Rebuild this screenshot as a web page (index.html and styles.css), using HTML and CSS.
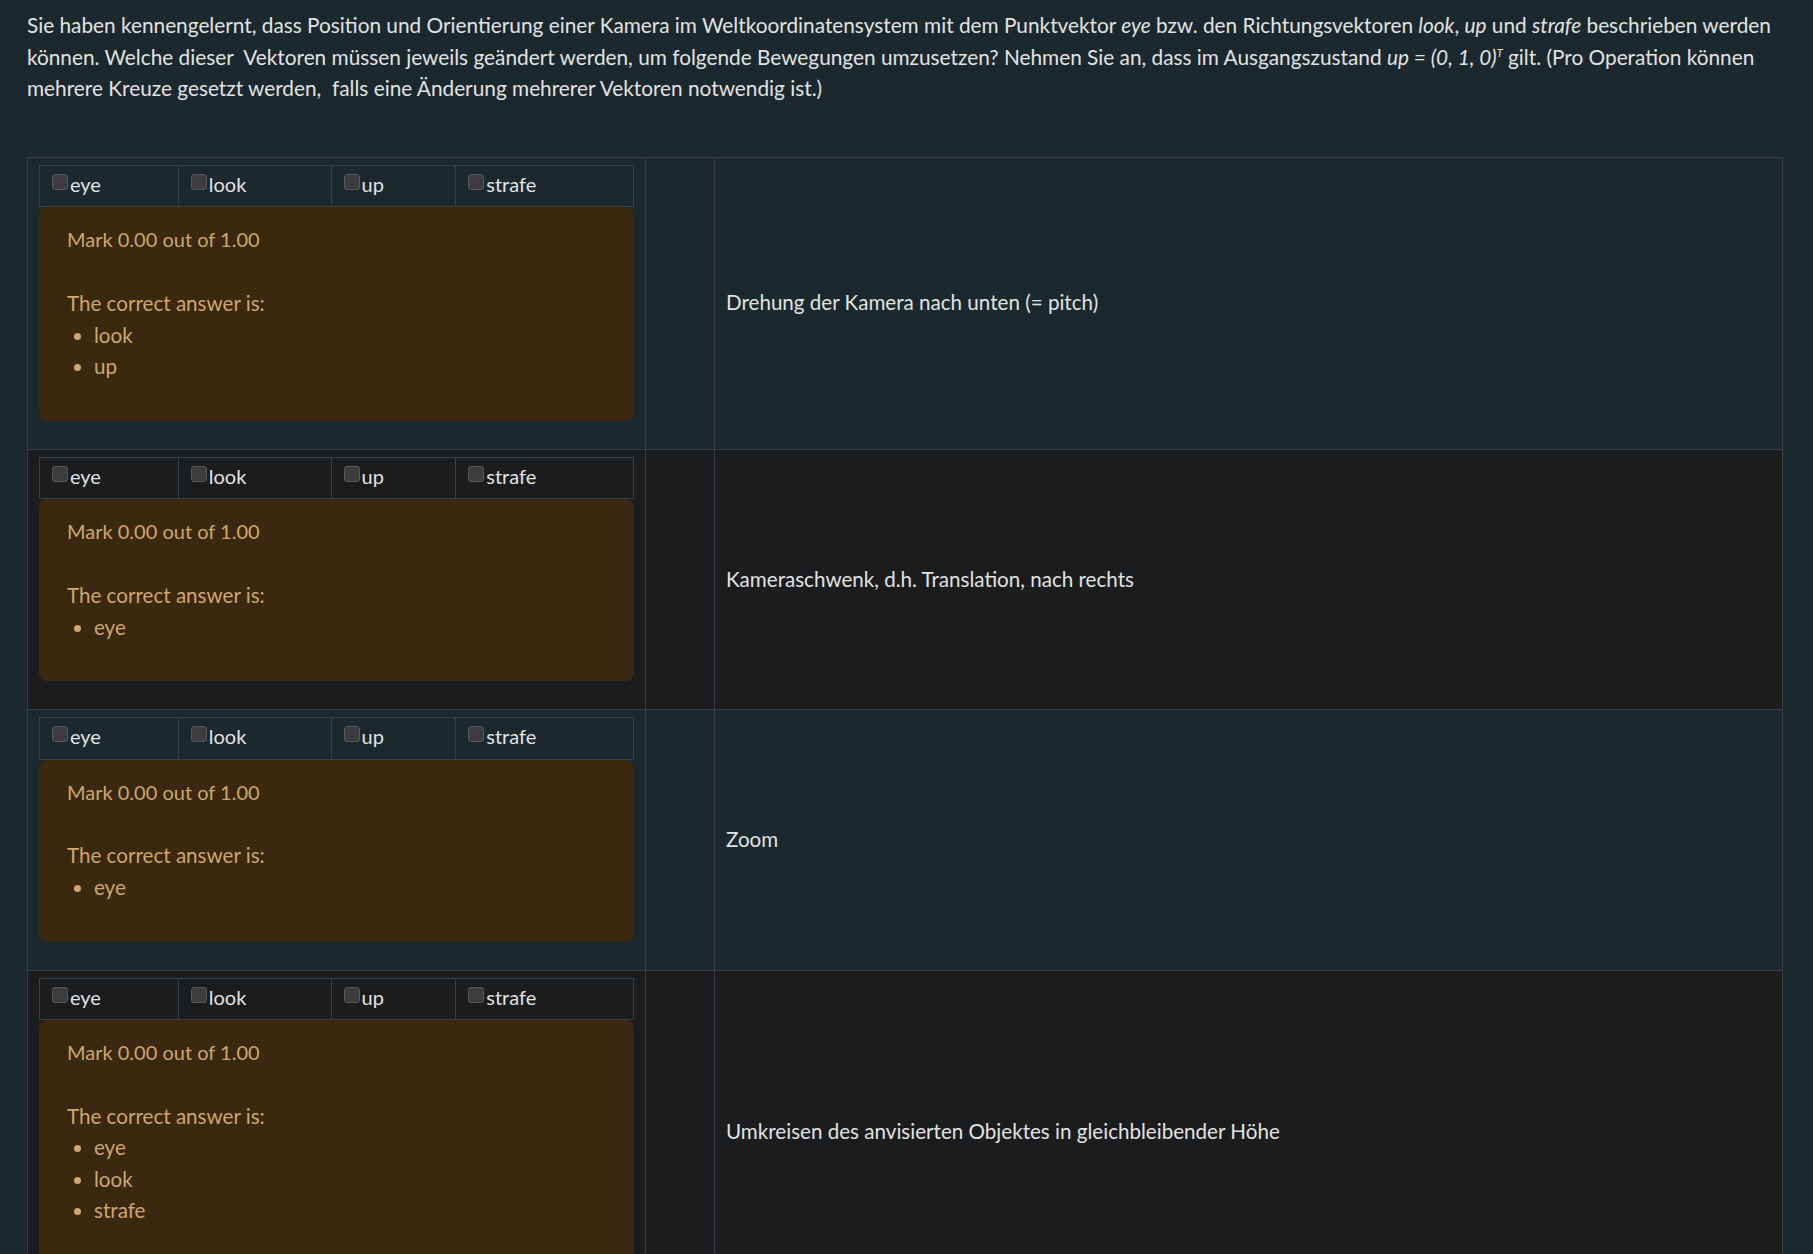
FILE: index.html
```html
<!DOCTYPE html>
<html lang="de">
<head>
<meta charset="utf-8">
<title>Frage</title>
<link rel="stylesheet" href="styles.css">
</head>
<body>
<div class="page">
  <p class="question">Sie haben kennengelernt, dass Position und Orientierung einer Kamera im Weltkoordinatensystem mit dem Punktvektor <em>eye</em> bzw. den Richtungsvektoren <em>look</em>, <em>up</em> und <em>strafe</em> beschrieben werden können. Welche dieser&nbsp; Vektoren müssen jeweils geändert werden, um folgende Bewegungen umzusetzen? Nehmen Sie an, dass im Ausgangszustand <em>up = (0, 1, 0)<sup>T</sup></em> gilt. (Pro Operation können mehrere Kreuze gesetzt werden,&nbsp; falls eine Änderung mehrerer Vektoren notwendig ist.)</p>

  <table class="matrix">
    <tr class="row odd">
      <td class="answer">
        <table class="choices">
          <tr>
            <td class="c1"><label><input type="checkbox">eye</label></td>
            <td class="c2"><label><input type="checkbox">look</label></td>
            <td class="c3"><label><input type="checkbox">up</label></td>
            <td class="c4"><label><input type="checkbox">strafe</label></td>
          </tr>
        </table>
        <div class="feedback">
          <div class="mark">Mark 0.00 out of 1.00</div>
          <div class="right">The correct answer is:
            <ul><li>look</li><li>up</li></ul>
          </div>
        </div>
      </td>
      <td class="spacer"></td>
      <td class="text">Drehung der Kamera nach unten (= pitch)</td>
    </tr>
    <tr class="row even">
      <td class="answer">
        <table class="choices">
          <tr>
            <td class="c1"><label><input type="checkbox">eye</label></td>
            <td class="c2"><label><input type="checkbox">look</label></td>
            <td class="c3"><label><input type="checkbox">up</label></td>
            <td class="c4"><label><input type="checkbox">strafe</label></td>
          </tr>
        </table>
        <div class="feedback">
          <div class="mark">Mark 0.00 out of 1.00</div>
          <div class="right">The correct answer is:
            <ul><li>eye</li></ul>
          </div>
        </div>
      </td>
      <td class="spacer"></td>
      <td class="text">Kameraschwenk, d.h. Translation, nach rechts</td>
    </tr>
    <tr class="row odd">
      <td class="answer">
        <table class="choices">
          <tr>
            <td class="c1"><label><input type="checkbox">eye</label></td>
            <td class="c2"><label><input type="checkbox">look</label></td>
            <td class="c3"><label><input type="checkbox">up</label></td>
            <td class="c4"><label><input type="checkbox">strafe</label></td>
          </tr>
        </table>
        <div class="feedback">
          <div class="mark">Mark 0.00 out of 1.00</div>
          <div class="right">The correct answer is:
            <ul><li>eye</li></ul>
          </div>
        </div>
      </td>
      <td class="spacer"></td>
      <td class="text">Zoom</td>
    </tr>
    <tr class="row even">
      <td class="answer">
        <table class="choices">
          <tr>
            <td class="c1"><label><input type="checkbox">eye</label></td>
            <td class="c2"><label><input type="checkbox">look</label></td>
            <td class="c3"><label><input type="checkbox">up</label></td>
            <td class="c4"><label><input type="checkbox">strafe</label></td>
          </tr>
        </table>
        <div class="feedback">
          <div class="mark">Mark 0.00 out of 1.00</div>
          <div class="right">The correct answer is:
            <ul><li>eye</li><li>look</li><li>strafe</li></ul>
          </div>
        </div>
      </td>
      <td class="spacer"></td>
      <td class="text">Umkreisen des anvisierten Objektes in gleichbleibender Höhe</td>
    </tr>
  </table>
</div>
</body>
</html>
```

FILE: styles.css
```css
html, body {
  margin: 0;
  padding: 0;
  background: #1b282e;
}

body {
  color: #e2e2e2;
  font-family: Lato, "Noto Sans", sans-serif;
  font-size: 20.6px;
  line-height: 31.6px;
}

.page {
  width: 1756px;
  padding: 0 0 0 27px;
}

.question {
  margin: 0;
  padding-top: 9px;
  font-size: 20.8px;
}

.question em {
  font-style: italic;
}

.question sup {
  font-size: 11px;
  line-height: 0;
  vertical-align: 8px;
}

.matrix {
  margin-top: 53px;
  border-collapse: collapse;
  width: 1756px;
}

.matrix .row > td {
  border: 1px solid #373d42;
}

.row.odd {
  background: #1b282e;
}

.row.even {
  background: #1b1c1e;
}

.matrix .row > td.answer {
  width: 595px;
  vertical-align: top;
  padding: 7px 11px 28px 11px;
}

.matrix .row > td.spacer {
  width: 68px;
  padding: 0;
}

.matrix .row > td.text {
  vertical-align: middle;
  padding: 0 11px;
  color: #e2e2e2;
}

.choices {
  border-collapse: collapse;
  width: 595px;
  font-size: 20px;
}

.choices td {
  border: 1px solid #364046;
  padding: 3px 0 6px 12px;
  color: #e2e2e2;
  white-space: nowrap;
}

.choices .c1 { width: 126px; }
.choices .c2 { width: 140px; }
.choices .c3 { width: 112px; }
.choices .c4 { width: 165px; }

.choices input {
  -webkit-appearance: none;
  appearance: none;
  width: 16px;
  height: 16px;
  margin: 0 2px 2px 0;
  vertical-align: baseline;
  background: #3b3c3e;
  border: 1px solid #56585b;
  border-radius: 3px;
  box-sizing: border-box;
}

.feedback {
  background: #3a2810;
  border-radius: 8px;
  color: #cfa66c;
  padding: 17px 28px 38px 28px;
}

.feedback .mark {
  font-size: 20px;
  margin-bottom: 32px;
}

.feedback ul {
  margin: 0;
  padding-left: 27px;
}

.feedback li::marker {
  color: #cfa66c;
}
```
